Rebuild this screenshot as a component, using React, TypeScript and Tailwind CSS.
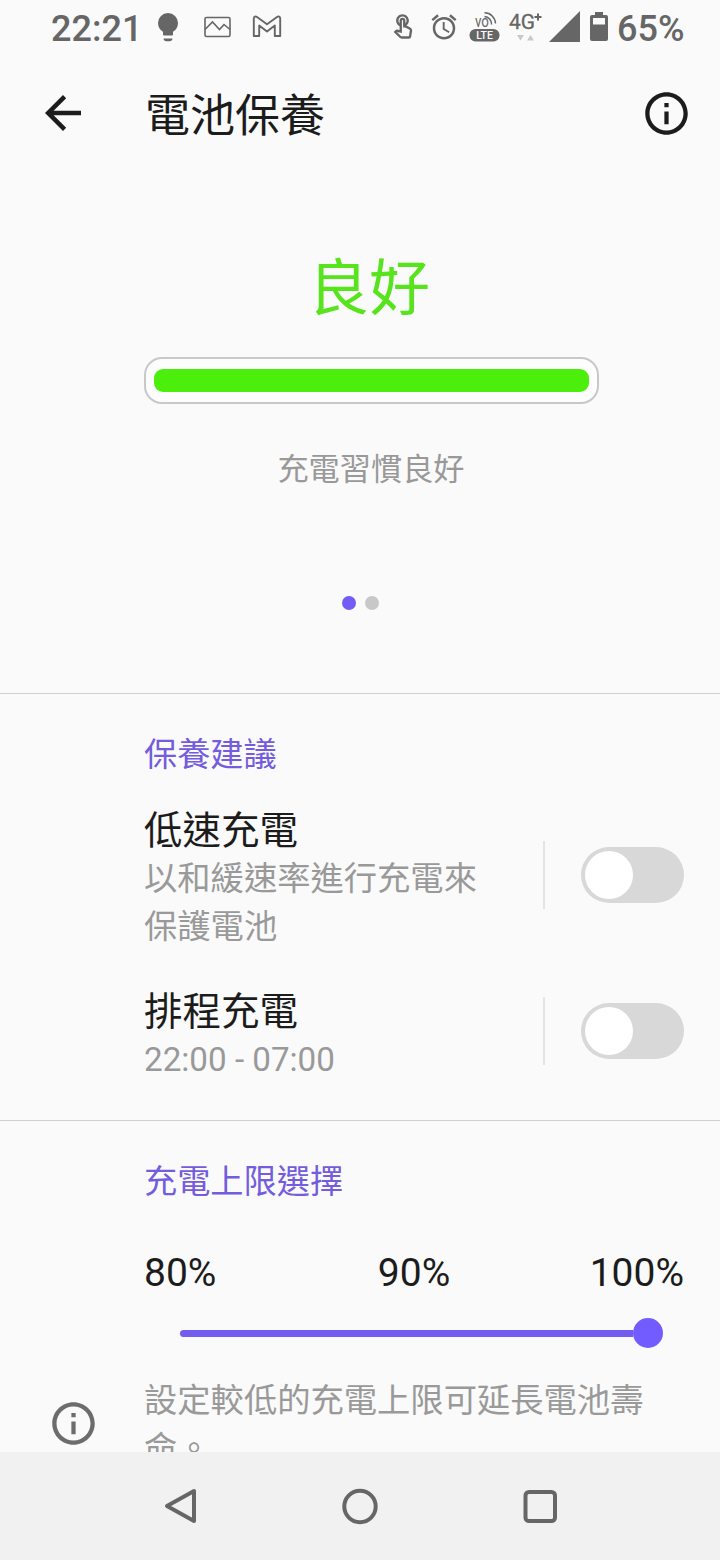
import React from "react";
import { MdAlarm, MdOutlineInfo, MdOutlineTouchApp } from "react-icons/md";

const Switch = ({ label }: { label: string }) => (
  <div className="flex h-[68px] items-center">
    <div className="h-full w-0.5 bg-[#e4e4e4]" />
    <button
      role="switch"
      aria-checked={false}
      aria-label={label}
      className="ml-9 flex h-14 w-[103px] items-center rounded-full bg-[#d8d8d8] pl-1"
    >
      <span className="h-12 w-12 rounded-full bg-white" />
    </button>
  </div>
);

const StatusBar = () => (
  <div className="flex h-14 items-start pl-[51px] text-[#666]">
    <span className="mt-[9px] w-[107px] text-[36px] font-medium leading-[40px]">22:21</span>
    {/* Notification icons */}
    <svg className="mt-[13px]" width="20" height="29" viewBox="0 0 20 29" fill="currentColor">
      <path d="M10 0a10 10 0 0 0-10 10c0 3.900 2 7 5 8.800v2.700a1 1 0 0 0 1 1h8a1 1 0 0 0 1-1v-2.700c3-1.800 5-4.900 5-8.800A10 10 0 0 0 10 0z" />
      <path d="M5.500 25.500h9a3 3 0 0 1-3 2.700h-3a3 3 0 0 1-3-2.700z" />
    </svg>
    <svg className="ml-[26px] mt-4" width="27" height="22" viewBox="0 0 27 22" fill="none" stroke="currentColor" strokeWidth="1.600">
      <rect x="1" y="1.500" width="25" height="19" rx="1.500" />
      <path d="M1 13.500l7.500-7.500 7 7.500 4.500-5 6 5" />
    </svg>
    {/* Mail: an M drawn as a hollow band */}
    <svg className="ml-[21px] mt-[15px]" width="30" height="23" viewBox="0 0 30 23" fill="none" stroke="currentColor" strokeWidth="1.900" strokeLinejoin="round">
      <path d="M1.800 3.200C1.800 1.500 3.500 1 5 2l10 7.300L25 2c1.500-1 3.200-.500 3.200 1.200V21h-5.400V10.500L15 16.500l-7.800-6V21H1.800z" />
    </svg>
    {/* System icons */}
    <MdOutlineTouchApp className="ml-[107px] mt-[13px] h-[28px] w-[28px]" />
    <MdAlarm className="ml-[11.500px] mt-[12px] h-[30px] w-[30px]" />
    <svg className="ml-[10.500px] mt-[11px]" width="31" height="32" viewBox="0 0 31 32" fill="none">
      <text x="6" y="16" fontSize="16" fill="currentColor" textLength="14" lengthAdjust="spacingAndGlyphs">vo</text>
      <path d="M15.500 5.500a7.500 7.500 0 0 1 7 8M15.500 1.800a11 11 0 0 1 11 10.700" stroke="currentColor" strokeWidth="1.500" />
      <rect x="0.500" y="18" width="30" height="12.500" rx="6" fill="currentColor" />
      <text x="15.500" y="28" fontSize="10.500" fontWeight="500" fill="#fafafa" textAnchor="middle">LTE</text>
    </svg>
    <svg className="ml-[9px] mt-[11px]" width="34" height="32" viewBox="0 0 34 32" fill="currentColor">
      <text x="0" y="18" fontSize="21" textLength="26" lengthAdjust="spacingAndGlyphs" stroke="currentColor" strokeWidth="0.300">4G</text>
      <path d="M29 2.500v7M25.500 6h7" stroke="currentColor" strokeWidth="2" />
      <path d="M8 24h7l-3.500 5.500zM18 29.500h7L21.500 24z" fill="#c8c8c8" />
    </svg>
    <svg className="ml-[6px] mt-[11px]" width="31" height="31" viewBox="0 0 31 31" fill="currentColor">
      <path d="M31 0v31H0z" />
    </svg>
    <svg className="ml-[10px] mt-[12px]" width="18" height="30" viewBox="0 0 18 30">
      <path fill="currentColor" fillRule="evenodd" d="M5 0h8v3h3a2 2 0 0 1 2 2v22a2 2 0 0 1-2 2H2a2 2 0 0 1-2-2V5a2 2 0 0 1 2-2h3zM3 6v6.500h12V6z" />
    </svg>
    <span className="ml-[9px] mt-[9px] text-[36px] font-medium leading-[40px]">65%</span>
  </div>
);

const NavBar = () => (
  <div className="flex h-[108px] shrink-0 items-center justify-between bg-[#f1f1f1] px-[160px] text-[#666]">
    <svg width="40" height="40" viewBox="0 0 40 40" fill="none" stroke="currentColor" strokeWidth="4" strokeLinejoin="round">
      <path d="M34 5v30L7 20z" />
    </svg>
    <svg width="40" height="40" viewBox="0 0 40 40" fill="none" stroke="currentColor" strokeWidth="4">
      <circle cx="20" cy="20.500" r="15.700" />
    </svg>
    <svg width="40" height="40" viewBox="0 0 40 40" fill="none" stroke="currentColor" strokeWidth="4">
      <rect x="5.500" y="6" width="29.500" height="29" rx="3.500" />
    </svg>
  </div>
);

export default function App() {
  return (
    <div className="flex h-[1560px] w-[720px] flex-col overflow-hidden bg-[#fafafa] font-[Roboto,'Noto_Sans_CJK_TC',sans-serif] text-[#1c1c1c]">
      <StatusBar />

      {/* App bar */}
      <header className="flex h-[114px] shrink-0 items-center pl-[36px] pr-[28px]">
        <svg width="54" height="54" viewBox="0 0 24 24" fill="currentColor">
          <path d="M20 11H7.830l5.590-5.590L12 4l-8 8 8 8 1.410-1.410L7.830 13H20v-2z" />
        </svg>
        <h1 className="ml-[55px] flex-1 pt-2 text-[45px] leading-[60px]">電池保養</h1>
        <MdOutlineInfo className="h-[51px] w-[51px]" />
      </header>

      {/* Battery health */}
      <section className="flex h-[524px] shrink-0 flex-col border-b border-[#cfcfcf] pl-[144px] pr-[121px] pt-[79px]">
        <div className="pr-[5px] text-center text-[61px] leading-[80px] text-[#57e41c]">良好</div>
        <div className="mt-[28px] flex h-[47px] items-center rounded-[18px] border-2 border-[#c8c8cb] bg-[#fdfdfd] px-2">
          <div className="h-[23px] w-full rounded-[9px] bg-[#4bef0b]" />
        </div>
        <div className="mt-[45px] pr-px text-center text-[31.200px] leading-[42px] text-[#999]">充電習慣良好</div>
        <div className="mt-[105px] flex justify-center gap-[9px] pr-[23px]">
          <span className="h-[14px] w-[14px] rounded-full bg-[#735cf5]" />
          <span className="h-[14px] w-[14px] rounded-full bg-[#c8c8c8]" />
        </div>
      </section>

      {/* Care suggestions */}
      <section className="h-[427px] shrink-0 border-b border-[#cfcfcf] pl-[144px] pr-9 pt-[37px]">
        <h2 className="text-[33.200px] leading-[48px] text-[#735cdd]">保養建議</h2>
        <div className="mt-[28px] flex h-[144px] items-start justify-between">
          <div className="w-[350px]">
            <div className="text-[38.500px] leading-[48px]">低速充電</div>
            <div className="text-[33.300px] leading-[48px] text-[#999]">以和緩速率進行充電來保護電池</div>
          </div>
          <div className="mt-[34px]">
            <Switch label="低速充電" />
          </div>
        </div>
        <div className="mt-[37px] flex h-24 items-start justify-between">
          <div className="w-[350px]">
            <div className="text-[38.500px] leading-[48px]">排程充電</div>
            <div className="text-[33.200px] leading-[48px] text-[#999]">22:00 - 07:00</div>
          </div>
          <div className="mt-[9px]">
            <Switch label="排程充電" />
          </div>
        </div>
      </section>

      {/* Charging limit */}
      <section className="min-h-0 flex-1 overflow-hidden pr-9 pt-[37px]">
        <h2 className="pl-[144px] text-[33.200px] leading-[48px] text-[#735cdd]">充電上限選擇</h2>
        <div className="mt-[43px] flex justify-between pl-[144px] text-[39px] leading-[48px]">
          <span>80%</span>
          <span className="pl-[22px]">90%</span>
          <span>100%</span>
        </div>
        <div className="ml-[180px] mt-[21px] flex h-[30px] w-[483px] items-center">
          <div className="h-[7px] flex-1 rounded-l-full bg-[#735cf0]" />
          <div className="h-[30px] w-[30px] rounded-full bg-[#735cff]" />
        </div>
        <div className="mt-[29px] flex items-start">
          <MdOutlineInfo className="ml-[48px] mt-[21px] h-[51px] w-[51px] shrink-0 text-[#6c6c6c]" />
          <p className="ml-[45px] w-[510px] text-[33.300px] leading-[48px] text-[#999]">設定較低的充電上限可延長電池壽命。</p>
        </div>
      </section>

      <NavBar />
    </div>
  );
}
